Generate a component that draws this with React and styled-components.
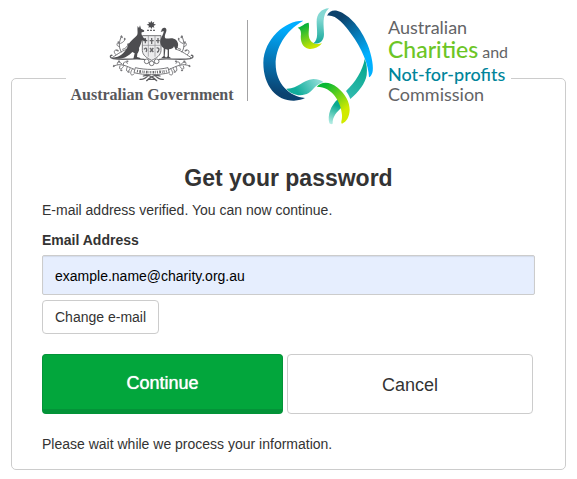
import React, { useState } from 'react'
import styled, { createGlobalStyle } from 'styled-components'

const GlobalStyle = createGlobalStyle`
* {
  box-sizing: border-box;
}

body {
  margin: 0;
  background: #fff;
  color: #333;
  font-family: "Liberation Sans", Arial, sans-serif;
  font-size: 14px;
  line-height: 20px;
}
`

const Page = styled.main`
padding: 78px 11px 9px;
`

const Card = styled.form`
display: flex;
flex-direction: column;
align-items: stretch;
padding: 0 30px 15px;
border: 1px solid #ccc;
border-radius: 5px;
`

/* sits over the top border of the card */
const Brand = styled.header`
display: flex;
align-items: flex-start;
align-self: center;
margin: -79px 0 34px;
padding: 0 5px 0 6px;
height: 130px;
background: #fff;
`

const Government = styled.div`
display: flex;
flex-direction: column;
align-items: center;
padding-top: 20px;
width: 160px;
color: #58585b;
font: bold 16px/26px "Liberation Serif", "Times New Roman", serif;
white-space: nowrap;
`

const Divider = styled.div`
width: 1px;
height: 81px;
margin: 20px 14px 0 15px;
background: #a3a3a5;
`

const MapLogo = styled.svg`
margin-top: 7px;
flex: none;
`

const Wordmark = styled.div`
display: flex;
flex-direction: column;
width: 118px;
margin-left: 14px;
padding-top: 17px;
color: #636466;
font-family: Lato, sans-serif;
font-size: 18px;
line-height: 20px;
white-space: nowrap;
`

const Charities = styled.span`
display: flex;
align-items: baseline;
gap: 4px;
font-size: 16px;
line-height: 24px;

b {
  color: #6cc526;
  font-size: 23px;
  font-weight: 500;
}
`

const NonProfits = styled.span`
color: #00859b;
font-weight: 500;
`

const Title = styled.h1`
margin: 0 0 8px;
font-size: 23px;
line-height: 28px;
text-align: center;
`

const Text = styled.p`
margin: 0;
`

const Label = styled.label`
margin: 10px 0 5px;
font-weight: bold;
`

const Input = styled.input`
width: 100%;
height: 40px;
padding: 2px 12px 0;
border: 1px solid #ccc;
border-radius: 2px;
background: #e6eefe;
box-shadow: inset 0 1px 1px rgba(0, 0, 0, 0.08);
color: #000;
font: inherit;
`

const Button = styled.button`
border: 1px solid #ccc;
border-radius: 4px;
background: #fff;
color: #333;
font: inherit;
cursor: pointer;
`

const ChangeButton = styled(Button)`
align-self: flex-start;
height: 34px;
margin-top: 5px;
padding: 0 12px;
`

const Actions = styled.div`
display: grid;
grid-template-columns: 49fr 50fr;
gap: 4px;
margin: 20px 2px 20px 0;
`

const ActionButton = styled(Button)`
height: 60px;
padding: 2px 0 0;
border-color: ${({ $primary }) => ($primary ? '#039338' : '#ccc')};
border-bottom-width: ${({ $primary }) => ($primary ? '5px' : '1px')};
background: ${({ $primary }) => ($primary ? '#02a63c' : '#fff')};
color: ${({ $primary }) => ($primary ? '#fff' : '#333')};
text-shadow: ${({ $primary }) => ($primary ? '0 0 1px #fff' : 'none')};
font-size: 18px;
`

const Sprig = () => (
  <g fill="none" stroke="#77777a" strokeWidth="3" strokeLinecap="round">
    <path d="M158 172 C176 160 190 150 202 148 M184 156 C174 138 178 126 184 108 M182 130 C192 126 196 120 194 116 M178 140 C168 138 170 130 174 128 M188 148 C198 146 204 138 204 132 M168 164 C158 156 164 148 170 150" />
    <path d="M162 198 C180 188 200 198 222 208 M174 194 C166 184 180 184 186 192 M190 196 C188 184 200 182 202 190 M180 198 C174 212 186 208 190 200 M202 200 C194 216 206 220 210 206 M218 206 C206 222 214 230 222 222" />
    <path strokeWidth="5" d="M184 109 l2 3 M175 126 l1 3 M194 116 v2 M205 132 v2 M171 151 l3 1 M176 184 h2 M201 184 h2 M183 211 h2 M205 216 h2 M162 197 l-1 2" />
  </g>
)

const Crest = () => (
  <svg width="88" height="62" viewBox="144 60 264 186" aria-hidden="true">
    <path fill="#4d4d50" d="M274 62 l3 6 6-3 -2 6 7 3 -7 3 2 6 -6-2 -3 6 -3-6 -6 2 2-6 -7-3 7-3 -2-6 6 3z" />
    <path stroke="#6a6a6d" strokeWidth="4" strokeDasharray="6 3" d="M261 91 H288" />
    <Sprig />
    <g transform="translate(550 0) scale(-1 1)"><Sprig /></g>
    <path fill="#ececed" stroke="#77777a" strokeWidth="3" d="M247 107 H303 V152 C302 166 290 174 275 181 C260 174 248 166 247 152Z" />
    <path stroke="#8b8b8e" strokeWidth="2" d="M265 108 V170 M285 108 V170 M248 136 H302" />
    <g fill="none" stroke="#67676a" strokeWidth="4">
      <path d="M256 114 V130 M250 122 H262 M275 114 V132 M269 122 H281 M294 114 V130 M288 122 H299" />
      <path d="M252 148 C260 138 262 150 258 156 M270 144 L280 156 M280 144 L270 156 M290 144 C300 142 298 154 291 157" />
    </g>
    <path fill="none" stroke="#636366" strokeWidth="4" strokeLinecap="round" d="M159 175 C148 175 150 164 156 166 M159 176 C190 181 228 174 252 178 C264 181 268 192 275 194 C282 192 286 181 298 178 C322 174 360 181 391 176 M391 175 C402 175 400 164 394 166" />
    <g fill="#fff" stroke="#77777a" strokeWidth="3">
      <circle cx="260" cy="184" r="7" />
      <circle cx="275" cy="190" r="7" />
      <circle cx="290" cy="184" r="7" />
      <path d="M226 203 C255 210 294 210 324 203 L328 218 C296 226 254 226 222 218Z" />
    </g>
    <path fill="none" stroke="#68686b" strokeWidth="8" strokeDasharray="3 4 5 3 2 3" d="M231 213 C260 218 290 218 320 213" />
    <path fill="none" stroke="#5e5e61" strokeWidth="4" strokeLinecap="round" d="M250 228 C264 222 280 232 290 242 M300 228 C286 222 270 232 260 242 M240 238 C252 240 260 232 266 226 M310 238 C298 240 290 232 284 226 M264 238 H286" />
    <path fill="#4d4d50" d="M233 78 L237 84 L240 76 L243 86 L252 91 C254 94 252 97 245 97 C243 102 246 107 249 112 L260 120 L258 124 L246 121 C243 130 241 138 237 144 C239 151 235 156 232 161 L231 171 L241 174 V177 H220 L224 160 L217 156 C207 166 195 176 177 176 H158 V173 C180 172 193 160 202 142 C206 126 223 116 231 106 C235 99 231 91 233 78Z" />
    <path fill="#4d4d50" d="M304 92 C305 83 316 80 319 88 C321 97 313 103 315 113 C320 120 337 108 349 121 C357 130 356 142 347 149 L342 139 C340 146 333 148 327 148 L327 170 L334 175 H316 L323 169 V149 L316 147 L314 169 L320 175 H303 L311 168 L311 145 C302 138 299 128 301 120 C304 111 312 101 311 93 L302 96Z" />
  </svg>
)

const Ribbon = ({ id, from, to, x1, y1, x2, y2, d }) => (
  <>
    <linearGradient id={id} gradientUnits="userSpaceOnUse" x1={x1} y1={y1} x2={x2} y2={y2}>
      <stop offset="0" stopColor={from} />
      <stop offset="1" stopColor={to} />
    </linearGradient>
    <path fill={`url(#${id})`} d={d} />
  </>
)

const ribbons = [
  { id: 'west', from: '#00adff', to: '#0b4270', x1: 120, y1: 85, x2: 90, y2: 280, d: 'M160 62 C108 60 42 115 40 188 C40 260 82 303 132 302 C146 301 158 298 165 294 C118 290 77 250 77 192 C77 145 104 94 160 62Z' },
  { id: 'gulfWest', from: '#08b23b', to: '#c9e600', x1: 160, y1: 78, x2: 190, y2: 140, d: 'M143 83 C157 80 164 68 176 68 C180 86 171 104 181 121 C189 134 204 133 216 130 C206 142 192 148 178 147 C156 143 150 122 153 102 C153 92 150 86 143 83Z' },
  { id: 'gulfEast', from: '#84d8d3', to: '#16a99b', x1: 215, y1: 55, x2: 207, y2: 130, d: 'M237 25 C214 26 200 42 200 65 C200 92 207 118 190 130 C207 134 222 124 222 103 C222 78 214 45 237 25Z' },
  { id: 'cape', from: '#0c426c', to: '#00b0ff', x1: 265, y1: 60, x2: 350, y2: 165, d: 'M231 47 C238 33 250 29 263 33 C300 44 334 88 352 132 C366 166 372 205 367 218 C365 225 361 230 357 232 C356 195 336 145 303 101 C282 73 258 43 231 47Z' },
  { id: 'east', from: '#08a990', to: '#30b9ad', x1: 345, y1: 200, x2: 300, y2: 290, d: 'M344 177 C339 210 314 250 288 273 C294 281 298 289 301 297 C326 276 346 250 350 225 C352 206 350 190 344 177Z' },
  { id: 'tail', from: '#08a990', to: '#b8eee6', x1: 265, y1: 318, x2: 243, y2: 372, d: 'M263 298 C242 318 232 345 238 370 C241 373 245 373 248 371 C247 350 260 336 277 321 C274 312 269 304 263 298Z' },
  { id: 'bight', from: '#10ad9b', to: '#8adbd5', x1: 145, y1: 280, x2: 205, y2: 242, d: 'M109 266 C146 267 155 240 190 237 C204 237 215 242 221 247 C200 250 190 270 176 279 C155 291 124 286 109 266Z' },
  { id: 'south', from: '#05b834', to: '#d1ea00', x1: 225, y1: 255, x2: 285, y2: 330, d: 'M200 260 C216 242 241 246 263 263 C286 282 299 305 299 330 C298 351 290 365 276 371 C271 368 277 360 276 345 C274 306 245 259 200 260Z' },
]

const App = () => {

  const [email, setEmail] = useState('example.name@charity.org.au')

  return (
    <Page>
      <GlobalStyle />
      <Card onSubmit={(e) => e.preventDefault()}>
        <Brand>
          <Government>
            <Crest />
            <span>Australian Government</span>
          </Government>
          <Divider />
          <MapLogo width="112" height="118" viewBox="36 21 336 354" aria-hidden="true">
            {ribbons.map((ribbon) => <Ribbon key={ribbon.id} {...ribbon} />)}
          </MapLogo>
          <Wordmark>
            <span>Australian</span>
            <Charities><b>Charities</b> and</Charities>
            <NonProfits>Not-for-profits</NonProfits>
            <span>Commission</span>
          </Wordmark>
        </Brand>
        <Title>Get your password</Title>
        <Text>E-mail address verified. You can now continue.</Text>
        <Label htmlFor="email">Email Address</Label>
        <Input id="email" type="email" value={email} onChange={(e) => setEmail(e.target.value)} />
        <ChangeButton type="button">Change e-mail</ChangeButton>
        <Actions>
          <ActionButton type="submit" $primary>Continue</ActionButton>
          <ActionButton type="button">Cancel</ActionButton>
        </Actions>
        <Text>Please wait while we process your information.</Text>
      </Card>
    </Page>
  )
}

export default App
